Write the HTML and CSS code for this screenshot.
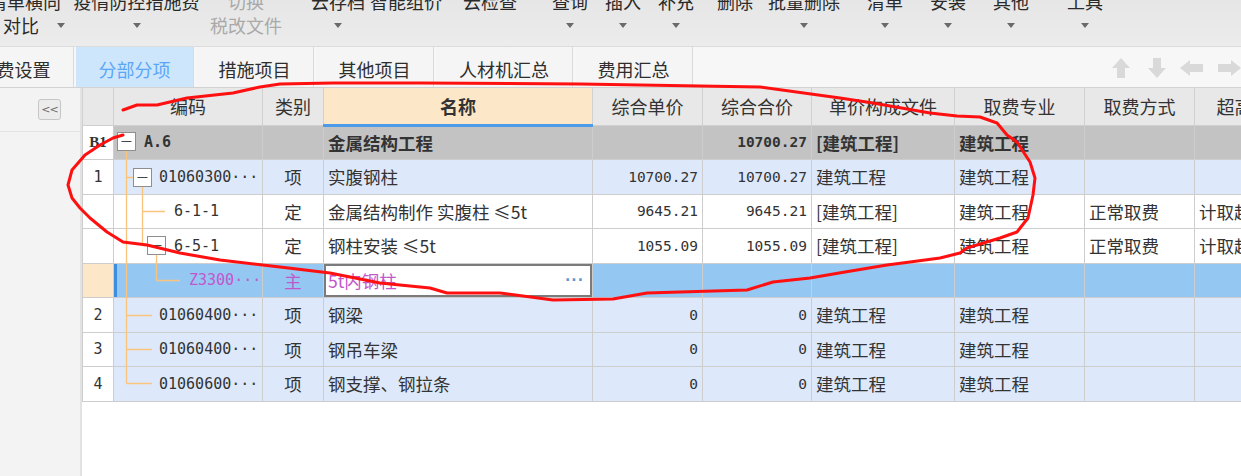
FILE: index.html
```html
<!DOCTYPE html>
<html lang="zh">
<head>
<meta charset="utf-8">
<title>分部分项</title>
<link rel="stylesheet" href="styles.css">
</head>
<body>
<div class="app">
  <div class="toolbar">
    <div class="tb t1"><span>清单横向</span><span class="l2 left">对比<i class="caret"></i></span></div>
    <div class="tb t2"><span>疫情防控措施费</span><span class="l2"><i class="caret"></i></span></div>
    <div class="tb t3 off"><span>切换</span><span class="l2">税改文件</span></div>
    <div class="tb t4"><span>云存档</span><span class="l2"><i class="caret"></i></span></div>
    <div class="tb t5"><span>智能组价</span><span class="l2"></span></div>
    <div class="tb t6"><span>云检查</span><span class="l2"></span></div>
    <div class="tb t7"><span>查询</span><span class="l2"><i class="caret"></i></span></div>
    <div class="tb t8"><span>插入</span><span class="l2"><i class="caret"></i></span></div>
    <div class="tb t9"><span>补充</span><span class="l2"><i class="caret"></i></span></div>
    <div class="tb t10"><span>删除</span><span class="l2"></span></div>
    <div class="tb t11"><span>批量删除</span><span class="l2"><i class="caret"></i></span></div>
    <div class="tb t12"><span>清单</span><span class="l2"><i class="caret"></i></span></div>
    <div class="tb t13"><span>安装</span><span class="l2"><i class="caret"></i></span></div>
    <div class="tb t14"><span>其他</span><span class="l2"><i class="caret"></i></span></div>
    <div class="tb t15"><span>工具</span><span class="l2"><i class="caret"></i></span></div>
  </div>

  <div class="tabs">
    <div class="tab first">取费设置</div>
    <div class="tab active">分部分项</div>
    <div class="tab">措施项目</div>
    <div class="tab">其他项目</div>
    <div class="tab wide">人材机汇总</div>
    <div class="tab">费用汇总</div>
    <div class="nav-arrows">
      <svg class="a-up" width="18" height="20" viewBox="0 0 18 20"><path d="M9 0 L18 10 L13 10 L13 20 L5 20 L5 10 L0 10 Z" fill="#d9d9d9"/></svg>
      <svg class="a-down" width="18" height="20" viewBox="0 0 18 20"><path d="M9 20 L18 10 L13 10 L13 0 L5 0 L5 10 L0 10 Z" fill="#d9d9d9"/></svg>
      <svg class="a-left" width="23" height="16" viewBox="0 0 23 16"><path d="M0 8 L10 0 L10 4 L23 4 L23 12 L10 12 L10 16 Z" fill="#d9d9d9"/></svg>
      <svg class="a-right" width="23" height="16" viewBox="0 0 23 16"><path d="M23 8 L13 0 L13 4 L0 4 L0 12 L13 12 L13 16 Z" fill="#d9d9d9"/></svg>
    </div>
  </div>

  <div class="main">
    <div class="side">
      <div class="side-head"><span class="collapse">&lt;&lt;</span></div>
    </div>
    <div class="grid-wrap">
      <table class="grid">
        <colgroup>
          <col class="c-no"><col class="c-code"><col class="c-type"><col class="c-name"><col class="c-price"><col class="c-total"><col class="c-file"><col class="c-spec"><col class="c-way"><col class="c-last">
        </colgroup>
        <thead>
          <tr>
            <th></th><th>编码</th><th>类别</th><th class="name-h">名称</th><th>综合单价</th><th>综合合价</th><th>单价构成文件</th><th>取费专业</th><th>取费方式</th><th>超高过滤类别</th>
          </tr>
        </thead>
        <tbody>
          <tr class="r-b1">
            <td class="no b1">B1</td><td class="code i0">A.6</td><td></td><td>金属结构工程</td><td class="num"></td><td class="num">10700.27</td><td>[建筑工程]</td><td>建筑工程</td><td></td><td></td>
          </tr>
          <tr class="r-qd">
            <td class="no">1</td><td class="code i1">01060300···</td><td class="c">项</td><td>实腹钢柱</td><td class="num">10700.27</td><td class="num">10700.27</td><td>建筑工程</td><td>建筑工程</td><td></td><td></td>
          </tr>
          <tr class="r-de">
            <td class="no"></td><td class="code i2">6-1-1</td><td class="c">定</td><td>金属结构制作 实腹柱 ≤5t</td><td class="num">9645.21</td><td class="num">9645.21</td><td>[建筑工程]</td><td>建筑工程</td><td>正常取费</td><td>计取超高</td>
          </tr>
          <tr class="r-de">
            <td class="no"></td><td class="code i2">6-5-1</td><td class="c">定</td><td>钢柱安装 ≤5t</td><td class="num">1055.09</td><td class="num">1055.09</td><td>[建筑工程]</td><td>建筑工程</td><td>正常取费</td><td>计取超高</td>
          </tr>
          <tr class="r-sel">
            <td class="no"></td><td class="code i3 mark">Z3300···</td><td class="c purple">主</td><td class="edit"><span class="edit-in"><span class="purple">5t内钢柱</span><span class="more">···</span></span></td><td class="num"></td><td class="num"></td><td></td><td></td><td></td><td></td>
          </tr>
          <tr class="r-qd">
            <td class="no">2</td><td class="code i1">01060400···</td><td class="c">项</td><td>钢梁</td><td class="num">0</td><td class="num">0</td><td>建筑工程</td><td>建筑工程</td><td></td><td></td>
          </tr>
          <tr class="r-qd">
            <td class="no">3</td><td class="code i1">01060400···</td><td class="c">项</td><td>钢吊车梁</td><td class="num">0</td><td class="num">0</td><td>建筑工程</td><td>建筑工程</td><td></td><td></td>
          </tr>
          <tr class="r-qd">
            <td class="no">4</td><td class="code i1">01060600···</td><td class="c">项</td><td>钢支撑、钢拉条</td><td class="num">0</td><td class="num">0</td><td>建筑工程</td><td>建筑工程</td><td></td><td></td>
          </tr>
        </tbody>
      </table>
      <svg class="tree" width="149" height="276" viewBox="0 0 149 276">
        <g stroke="#fbc47c" stroke-width="1.3" fill="none">
          <path d="M13.5 26 V258.5 M13.5 52.5 H20.5 M29.5 61.5 V120.5 M29.5 86.5 H52 M29.5 120.5 H34.5 M43.5 129.5 V155.5 M43.5 155.5 H67 M13.5 190.5 H39 M13.5 224.5 H39 M13.5 258.5 H39"/>
        </g>
        <g stroke="#8e8e8e" stroke-width="1" fill="#fff">
          <rect x="4.5" y="7.5" width="18" height="18"/>
          <rect x="20.5" y="43.5" width="18" height="18"/>
          <rect x="34.5" y="111.5" width="18" height="18"/>
        </g>
        <g stroke="#444" stroke-width="1.2">
          <path d="M8.5 16.5 H18.5 M24.5 52.5 H34.5 M38.5 120.5 H48.5"/>
        </g>
      </svg>
    </div>
  </div>

  <svg class="annot" width="1241" height="476" viewBox="0 0 1241 476">
    <path d="M123 110 L137 105 L157 105 L187 98 L233 93 L260 87 L280 84 L333 83 L420 83 L580 84 L760 87 L840 98 L873 103 L930 113 L957 116 L980 117 L997 123 L1007 135 L1017 142 L1030 162 L1035 178 L1033 195 L1028 218 L1017 232 L1000 238 L967 248 L960 253 L940 258 L910 262 L887 265 L845 272 L810 278 L773 282 L747 290 L680 292 L647 293 L613 299 L553 300 L500 293 L447 293 L430 288 L380 283 L330 273 L280 267 L220 260 L180 253 L147 245 L123 242 L107 232 L90 218 L80 208 L72 198 L68 185 L72 170 L85 155 L100 145 L113 138 L123 135" fill="none" stroke="#ff1010" stroke-width="3" stroke-linejoin="round" stroke-linecap="round"/>
  </svg>
</div>
</body>
</html>
```

FILE: styles.css
```css
* { box-sizing: border-box; }

body {
  margin: 0;
  width: 1241px;
  height: 476px;
  overflow: hidden;
  font-family: "Noto Sans CJK SC", "Noto Sans", sans-serif;
  color: #333;
  background: #f3f3f3;
}

.app {
  position: relative;
  width: 1241px;
  height: 476px;
  display: flex;
  flex-direction: column;
}

/* ---------- toolbar ---------- */
.toolbar {
  height: 46px;
  flex: none;
  display: flex;
  align-items: flex-start;
  overflow: hidden;
  background: linear-gradient(#e6e6e6, #ececec);
  font-size: 18px;
  line-height: 18px;
  color: #2a2a2a;
}

.tb {
  flex: none;
  display: flex;
  flex-direction: column;
  align-items: center;
  gap: 6px;
  margin-top: -8px;
  white-space: nowrap;
}

.tb .l2 {
  height: 18px;
  display: flex;
  align-items: center;
  justify-content: center;
}

.tb .l2.left {
  align-self: flex-start;
  padding-left: 15px;
  gap: 18px;
}

.tb.off { color: #a9a9a9; }

.caret {
  display: block;
  width: 0;
  height: 0;
  border-left: 4.5px solid transparent;
  border-right: 4.5px solid transparent;
  border-top: 5px solid #6a6a6a;
}

.t1  { margin-left: -12px; width: 74px; }
.t2  { margin-left: 11px;  width: 127px; }
.t3  { margin-left: 8px;   width: 76px; }
.t4  { margin-left: 27px;  width: 54px; }
.t5  { margin-left: 5px;   width: 72px; }
.t6  { margin-left: 21px;  width: 54px; }
.t7  { margin-left: 35px;  width: 36px; }
.t8  { margin-left: 17px;  width: 36px; }
.t9  { margin-left: 17px;  width: 36px; }
.t10 { margin-left: 23px;  width: 36px; }
.t11 { margin-left: 15px;  width: 72px; }
.t12 { margin-left: 27px;  width: 36px; }
.t13 { margin-left: 27px;  width: 36px; }
.t14 { margin-left: 27px;  width: 36px; }
.t15 { margin-left: 38px;  width: 36px; }

/* ---------- tabs ---------- */
.tabs {
  height: 42px;
  flex: none;
  display: flex;
  background: #f7f7f7;
  border-top: 1px solid #dcdcdc;
  border-bottom: 1px solid #d2d2d2;
  font-size: 18px;
}

.tab {
  flex: none;
  width: 118px;
  margin-right: 2px;
  display: flex;
  align-items: center;
  justify-content: center;
  padding-top: 3px;
  background: #f5f5f5;
  border-right: 1px solid #dadada;
  color: #2e2e2e;
  white-space: nowrap;
}

.tab.first { margin-left: -44px; width: 118px; }
.tab.wide { width: 137px; }

.tab.active {
  background: #cde6fb;
  color: #5ba6f5;
}

.nav-arrows {
  margin-left: auto;
  display: flex;
  align-items: center;
  padding-top: 2px;
}

.a-down { margin-left: 18px; }
.a-left { margin-left: 14px; }
.a-right { margin-left: 15px; }

/* ---------- main ---------- */
.main {
  flex: 1;
  display: flex;
  min-height: 0;
}

.side {
  width: 82px;
  flex: none;
  background: #f3f3f3;
  border-right: 2px solid #e2e2e2;
}

.side-head {
  height: 44px;
  border-bottom: 1px solid #e3e3e3;
  padding: 11px 0 0 38px;
}

.collapse {
  display: flex;
  align-items: center;
  justify-content: center;
  width: 23px;
  height: 21px;
  border: 1px solid #c6c6c6;
  border-radius: 3px;
  background: #ececec;
  color: #6a6a6a;
  font-family: "DejaVu Sans", sans-serif;
  font-size: 11px;
  letter-spacing: -1px;
}

.grid-wrap {
  position: relative;
  flex: 1;
  background: #fff;
  overflow: hidden;
}

.grid {
  table-layout: fixed;
  border-collapse: collapse;
  width: 1264px;
  font-size: 17.5px;
}

.c-no { width: 31px; }
.c-code { width: 149px; }
.c-type { width: 61px; }
.c-name { width: 269px; }
.c-price { width: 110px; }
.c-total { width: 109px; }
.c-file { width: 143px; }
.c-spec { width: 130px; }
.c-way { width: 110px; }
.c-last { width: 152px; }

.grid th {
  height: 37px;
  padding: 0;
  background: #e8e8e8;
  border: 1px solid #d0d0d0;
  border-top: none;
  font-weight: normal;
  font-size: 18px;
  color: #333;
  white-space: nowrap;
  overflow: hidden;
}

.grid th.name-h {
  background: #fde7c9;
  font-weight: bold;
  border-bottom: 3px solid #4c9be8;
}

.grid td {
  height: 34.5px;
  padding: 0 4px;
  border: 1px solid #cdcdcd;
  white-space: nowrap;
  overflow: hidden;
  color: #333;
}

.grid td.c { text-align: center; }

.grid td.num {
  text-align: right;
  padding-right: 4px;
  font-family: "DejaVu Sans Mono", monospace;
  font-size: 14.5px;
}

.grid td.code {
  font-family: "DejaVu Sans Mono", monospace;
  font-size: 15px;
}

.grid td.no {
  background: #fff;
  text-align: center;
  padding: 0;
  font-family: "DejaVu Sans Mono", monospace;
  font-size: 15px;
}

.grid td.no.b1 {
  font-family: "Liberation Serif", serif;
  font-weight: bold;
  font-size: 15px;
}

.i0 { padding-left: 30px !important; }
.i1 { padding-left: 45px !important; }
.i2 { padding-left: 60px !important; }
.i3 { padding-left: 75px !important; }

.r-b1 td { background: #c3c3c3; font-weight: bold; }
.r-qd td { background: #dde9fb; }
.r-de td { background: #fff; }
.r-sel td { background: #95c7f3; }
.r-sel td.no { background: #fde7c9; }
.r-sel td.mark { box-shadow: inset 3px 0 0 #3b8de6; }

.purple { color: #c257cc !important; }
.r-sel td.code { color: #c257cc; }

.grid td.edit {
  background: #fff;
  padding: 0;
  box-shadow: inset 0 0 0 2px #7b7b7b;
}

.edit-in {
  display: flex;
  align-items: center;
  justify-content: space-between;
  padding: 0 8px 0 4px;
}

.more {
  color: #5f95d4;
  font-family: "DejaVu Sans", sans-serif;
  font-size: 14px;
  font-weight: bold;
  letter-spacing: 1px;
}

.tree {
  position: absolute;
  left: 31px;
  top: 37px;
  pointer-events: none;
}

.annot {
  position: absolute;
  left: 0;
  top: 0;
  pointer-events: none;
}
```
